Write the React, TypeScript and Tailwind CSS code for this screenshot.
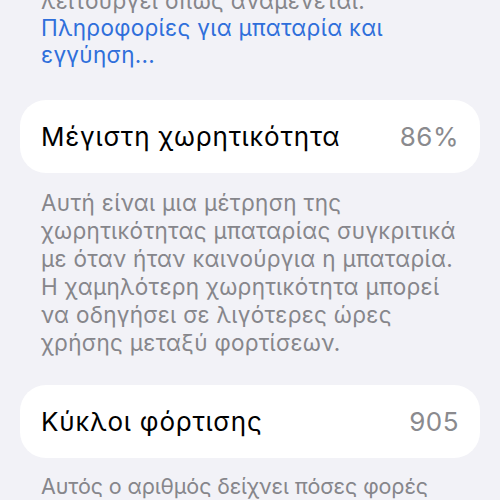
export default function App() {
  const font = { fontFamily: 'Inter, "Noto Sans", sans-serif' };
  return (
    <div className="w-[500px] h-[500px] overflow-hidden bg-[#f2f2f7]" style={font}>
      <div className="-mt-[13px] px-[41px] text-[22.5px] leading-[27px] tracking-[0.3px]">
        <p className="text-[#86868b] whitespace-nowrap">λειτουργεί όπως αναμένεται.</p>
        <p className="text-[#2f6fdb]">
          Πληροφορίες για μπαταρία και
          <br />
          εγγύηση...
        </p>
      </div>

      <div className="mx-5 mt-[32px] h-[73px] rounded-[26px] bg-white px-[21px] flex items-center justify-between">
        <span className="text-[26px] text-black tracking-[0.8px]">Μέγιστη χωρητικότητα</span>
        <span className="text-[26px] text-[#8a8a8e] tracking-[0.5px]">86%</span>
      </div>

      <p className="mt-[16px] px-[41px] text-[22.5px] leading-[28px] text-[#86868b] tracking-[0.3px]">
        Αυτή είναι μια μέτρηση της
        <br />
        χωρητικότητας μπαταρίας συγκριτικά
        <br />
        με όταν ήταν καινούργια η μπαταρία.
        <br />
        Η χαμηλότερη χωρητικότητα μπορεί
        <br />
        να οδηγήσει σε λιγότερες ώρες
        <br />
        χρήσης μεταξύ φορτίσεων.
      </p>

      <div className="mx-5 mt-[28px] h-[73px] rounded-[26px] bg-white px-[21px] flex items-center justify-between">
        <span className="text-[26px] text-black tracking-[0.8px]">Κύκλοι φόρτισης</span>
        <span className="text-[26px] text-[#8a8a8e] tracking-[0.5px]">905</span>
      </div>

      <p className="mt-[14px] px-[41px] text-[21.5px] leading-[28px] text-[#86868b] tracking-[-0.1px] whitespace-nowrap">
        Αυτός ο αριθμός δείχνει πόσες φορές
      </p>
    </div>
  );
}
